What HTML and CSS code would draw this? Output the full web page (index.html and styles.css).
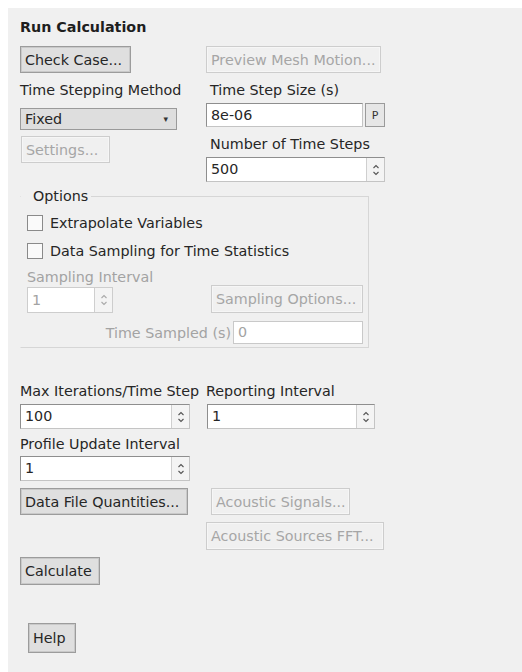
FILE: index.html
```html
<!DOCTYPE html>
<html lang="en">
<head>
<meta charset="utf-8">
<title>Run Calculation</title>
<link rel="stylesheet" href="styles.css">
</head>
<body>
<div class="panel">
  <div class="title">Run Calculation</div>

  <div class="grid row-check">
    <div class="col"><button class="btn w-check">Check Case...</button></div>
    <div class="col"><button class="btn off w-preview shift">Preview Mesh Motion...</button></div>
  </div>

  <div class="grid row-step">
    <div class="col">
      <div class="lbl">Time Stepping Method</div>
      <div class="select">Fixed<span class="caret">&#9662;</span></div>
      <button class="btn off w-settings">Settings...</button>
    </div>
    <div class="col">
      <div class="lbl shift">Time Step Size (s)</div>
      <div class="field-line">
        <div class="input w-stepsize">8e-06</div>
        <button class="pbtn">P</button>
      </div>
      <div class="lbl shift gap-lbl">Number of Time Steps</div>
      <div class="spin w-steps">
        <span class="val">500</span>
        <span class="arrows"><svg viewBox="0 0 8 14" width="8" height="14"><path d="M1.5 5 L4 2.5 L6.5 5 M1.5 9 L4 11.5 L6.5 9" fill="none" stroke="#555" stroke-width="1.1"/></svg></span>
      </div>
    </div>
  </div>

  <fieldset class="options">
    <legend>Options</legend>
    <div class="check"><span class="box"></span>Extrapolate Variables</div>
    <div class="check"><span class="box"></span>Data Sampling for Time Statistics</div>
    <div class="lbl off-text">Sampling Interval</div>
    <div class="sample-line">
      <div class="spin off w-interval">
        <span class="val">1</span>
        <span class="arrows"><svg viewBox="0 0 8 14" width="8" height="14"><path d="M1.5 5 L4 2.5 L6.5 5 M1.5 9 L4 11.5 L6.5 9" fill="none" stroke="#aaa" stroke-width="1.1"/></svg></span>
      </div>
      <button class="btn off w-sampling">Sampling Options...</button>
    </div>
    <div class="sampled-line">
      <span class="lbl off-text">Time Sampled (s)</span>
      <div class="input off w-sampled">0</div>
    </div>
  </fieldset>

  <div class="grid row-iter">
    <div class="col">
      <div class="lbl">Max Iterations/Time Step</div>
      <div class="spin w-left">
        <span class="val">100</span>
        <span class="arrows"><svg viewBox="0 0 8 14" width="8" height="14"><path d="M1.5 5 L4 2.5 L6.5 5 M1.5 9 L4 11.5 L6.5 9" fill="none" stroke="#555" stroke-width="1.1"/></svg></span>
      </div>
      <div class="lbl gap-lbl2">Profile Update Interval</div>
      <div class="spin w-left tight">
        <span class="val">1</span>
        <span class="arrows"><svg viewBox="0 0 8 14" width="8" height="14"><path d="M1.5 5 L4 2.5 L6.5 5 M1.5 9 L4 11.5 L6.5 9" fill="none" stroke="#555" stroke-width="1.1"/></svg></span>
      </div>
      <button class="btn w-data">Data File Quantities...</button>
    </div>
    <div class="col">
      <div class="lbl">Reporting Interval</div>
      <div class="spin w-report">
        <span class="val">1</span>
        <span class="arrows"><svg viewBox="0 0 8 14" width="8" height="14"><path d="M1.5 5 L4 2.5 L6.5 5 M1.5 9 L4 11.5 L6.5 9" fill="none" stroke="#555" stroke-width="1.1"/></svg></span>
      </div>
      <button class="btn off w-signals shift">Acoustic Signals...</button>
      <button class="btn off w-fft shift">Acoustic Sources FFT...</button>
    </div>
  </div>

  <button class="btn w-calc">Calculate</button>
  <button class="btn w-help">Help</button>
</div>
</body>
</html>
```

FILE: styles.css
```css
* { box-sizing: border-box; }

html, body {
  margin: 0;
  background: #ffffff;
}

body {
  font-family: "DejaVu Sans", "Noto Sans", sans-serif;
  font-size: 14.3px;
  color: #262626;
}

.panel {
  margin: 8px 0 0 8px;
  background: #f0f0f0;
  min-height: 664px;
  padding: 11px 0 0 12px;
}

.title {
  font-weight: bold;
  line-height: 16px;
  height: 16px;
  color: #1e1e1e;
}

.grid {
  display: grid;
  grid-template-columns: 186px 200px;
}

.col {
  display: flex;
  flex-direction: column;
  align-items: flex-start;
}

.shift { margin-left: 4px; }

.lbl {
  line-height: 16px;
  height: 16px;
  white-space: nowrap;
}

.off-text { color: #a3a3a3; }

/* push buttons */
.btn {
  font: inherit;
  color: #262626;
  height: 27px;
  padding: 0 4px;
  text-align: left;
  background: #dfdfdf;
  border: 1px solid #9c9c9c;
  box-shadow: inset 0 0 0 1px #c9c9c9;
  white-space: nowrap;
  overflow: hidden;
  margin: 0;
}

.btn.off {
  color: #a6a6a6;
  background: #f0f0f0;
  border-color: #cdcdcd;
  box-shadow: inset 0 0 0 1px #f6f6f6;
}

.row-check { margin-top: 11px; }
.w-check { width: 111px; }
.w-preview { width: 175px; }

.row-step { margin-top: 9px; }

.select {
  position: relative;
  margin-top: 10px;
  width: 157px;
  height: 22px;
  line-height: 20px;
  padding-left: 4px;
  background: #dedede;
  border: 1px solid #9a9a9a;
}

.caret {
  position: absolute;
  right: 8px;
  top: 0;
  font-size: 9px;
  color: #333;
}

.w-settings { width: 89px; margin-top: 6px; margin-left: 1px; }

.field-line {
  display: flex;
  gap: 2px;
  margin-top: 5px;
}

/* text entry boxes */
.input {
  height: 24px;
  line-height: 22px;
  padding-left: 4px;
  background: #ffffff;
  border: 1px solid #8e8e8e;
  border-bottom-color: #c4c4c4;
  border-right-color: #c4c4c4;
}

.input.off {
  color: #a3a3a3;
  border-color: #c9c9c9;
}

.w-stepsize { width: 157px; }

.pbtn {
  font: inherit;
  font-size: 11px;
  width: 20px;
  height: 24px;
  padding: 0;
  margin: 0;
  background: #e6e6e6;
  border: 1px solid #9a9a9a;
  color: #333;
}

.gap-lbl { margin-top: 9px; }

/* spin boxes */
.spin {
  display: flex;
  height: 25px;
  margin-top: 5px;
  background: #ffffff;
  border: 1px solid #8e8e8e;
  border-bottom-color: #c4c4c4;
  border-right-color: #c4c4c4;
}

.spin .val {
  flex: 1;
  line-height: 23px;
  padding-left: 4px;
}

.spin .arrows {
  width: 18px;
  display: flex;
  align-items: center;
  justify-content: center;
  border-left: 1px solid #cfcfcf;
  background: #f4f4f4;
}

.spin.off { color: #a3a3a3; border-color: #cdcdcd; }

.w-steps { width: 179px; }

/* options group */
.options {
  margin: 6px 0 0 0;
  width: 349px;
  padding: 9px 5px 3px 6px;
  border: 1px solid #d6d6d6;
  border-left-color: transparent;
}

.options legend {
  padding: 0 3px 0 12px;
  margin-left: -6px;
  line-height: 16px;
}

.check {
  display: flex;
  align-items: center;
  height: 20px;
  margin-bottom: 8px;
  white-space: nowrap;
}

.check .box {
  width: 16px;
  height: 16px;
  margin-right: 7px;
  background: #fafafa;
  border: 1px solid #8a8a8a;
}

.sample-line {
  display: flex;
  align-items: flex-start;
}

.w-interval { width: 86px; height: 26px; margin-top: 2px; }
.w-interval .val { line-height: 24px; }

.w-sampling { width: 152px; height: 28px; margin-left: 98px; }

.sampled-line {
  display: flex;
  align-items: center;
  justify-content: flex-end;
  margin-top: 8px;
  gap: 2px;
}

.w-sampled { width: 130px; height: 23px; line-height: 21px; }

.row-iter { margin-top: 35px; }

.w-left { width: 170px; }
.w-report { width: 168px; margin-left: 1px; }

.gap-lbl2 { margin-top: 7px; }
.spin.tight { margin-top: 4px; }

.w-data { width: 168px; margin-top: 7px; }
.w-signals { width: 139px; margin-top: 59px; margin-left: 5px; }
.w-fft { width: 178px; margin-top: 7px; height: 28px; }

.w-calc {
  display: block;
  width: 80px;
  height: 28px;
  margin-top: 7px;
}

.w-help {
  display: block;
  width: 48px;
  height: 30px;
  margin: 38px 0 0 8px;
}
```
